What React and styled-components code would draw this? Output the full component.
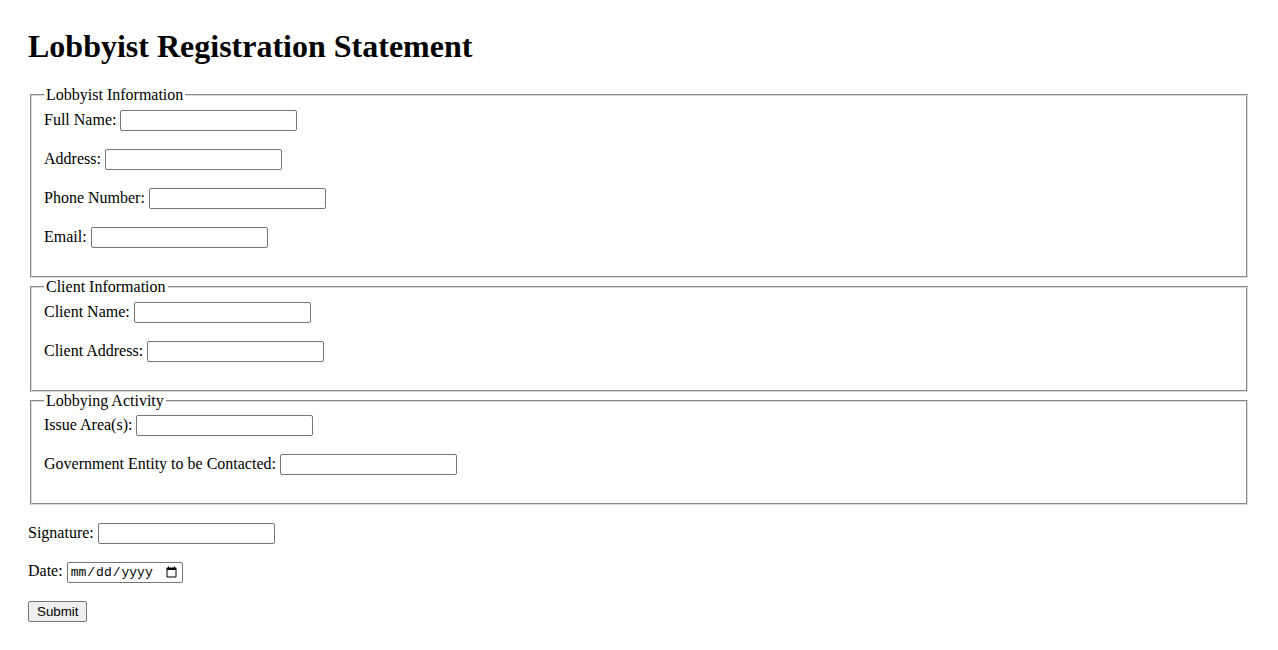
import React from 'react';
import styled, { createGlobalStyle } from 'styled-components';

const GlobalStyle = createGlobalStyle`
    body {
        margin: 0;
        background: #fff;
        color: #000;
        font-family: "Liberation Serif", "Times New Roman", serif;
        font-size: 16px;
    }
`;

const Page = styled.div`
    padding: 28px;
`;

const Title = styled.h1`
    font-size: 32px;
    font-weight: 700;
    margin: 0 0 21.44px 0;
`;

const Section = styled.fieldset`
    margin: 0 2px;
    padding: 5.6px 12px 10px 12px;
    border: 2px groove #dcdcdc;
    min-width: min-content;
`;

const Legend = styled.legend`
    padding: 0 2px;
`;

const Field = styled.div`
    min-height: 23px;
    margin-top: ${props => props.gap || 0}px;
    margin-bottom: 16px;
`;

const TextInput = styled.input`
    box-sizing: border-box;
    width: 177px;
    height: 21px;
    padding: 1px 2px;
    border: 1px solid #767676;
    border-radius: 2px;
    font-family: "Liberation Sans", Arial, sans-serif;
    font-size: 13.33px;
    vertical-align: baseline;
`;

const DateInput = styled(TextInput)`
    width: 116px;
    font-family: "Liberation Mono", "Courier New", monospace;
    font-size: 13px;
`;

const SubmitButton = styled.button`
    box-sizing: border-box;
    height: 21px;
    padding: 1px 8px;
    background: #efefef;
    border: 1px solid #767676;
    border-radius: 2px;
    font-family: "Liberation Sans", Arial, sans-serif;
    font-size: 13.33px;
    color: #000;
`;

const groups = [
    { legend: 'Lobbyist Information', fields: ['Full Name', 'Address', 'Phone Number', 'Email'] },
    { legend: 'Client Information', fields: ['Client Name', 'Client Address'] },
    { legend: 'Lobbying Activity', fields: ['Issue Area(s)', 'Government Entity to be Contacted'] },
];

const App = () => {
    return (
        <Page>
            <GlobalStyle />
            <Title>Lobbyist Registration Statement</Title>
            <form onSubmit={e => e.preventDefault()}>
                {groups.map(g => (
                    <Section key={g.legend}>
                        <Legend>{g.legend}</Legend>
                        {g.fields.map(f => (
                            <Field key={f}>
                                <label>{f}: </label>
                                <TextInput type="text" />
                            </Field>
                        ))}
                    </Section>
                ))}
                <Field gap={18}>
                    <label>Signature: </label>
                    <TextInput type="text" />
                </Field>
                <Field>
                    <label>Date: </label>
                    <DateInput type="date" />
                </Field>
                <SubmitButton type="submit">Submit</SubmitButton>
            </form>
        </Page>
    );
};

export default App;
